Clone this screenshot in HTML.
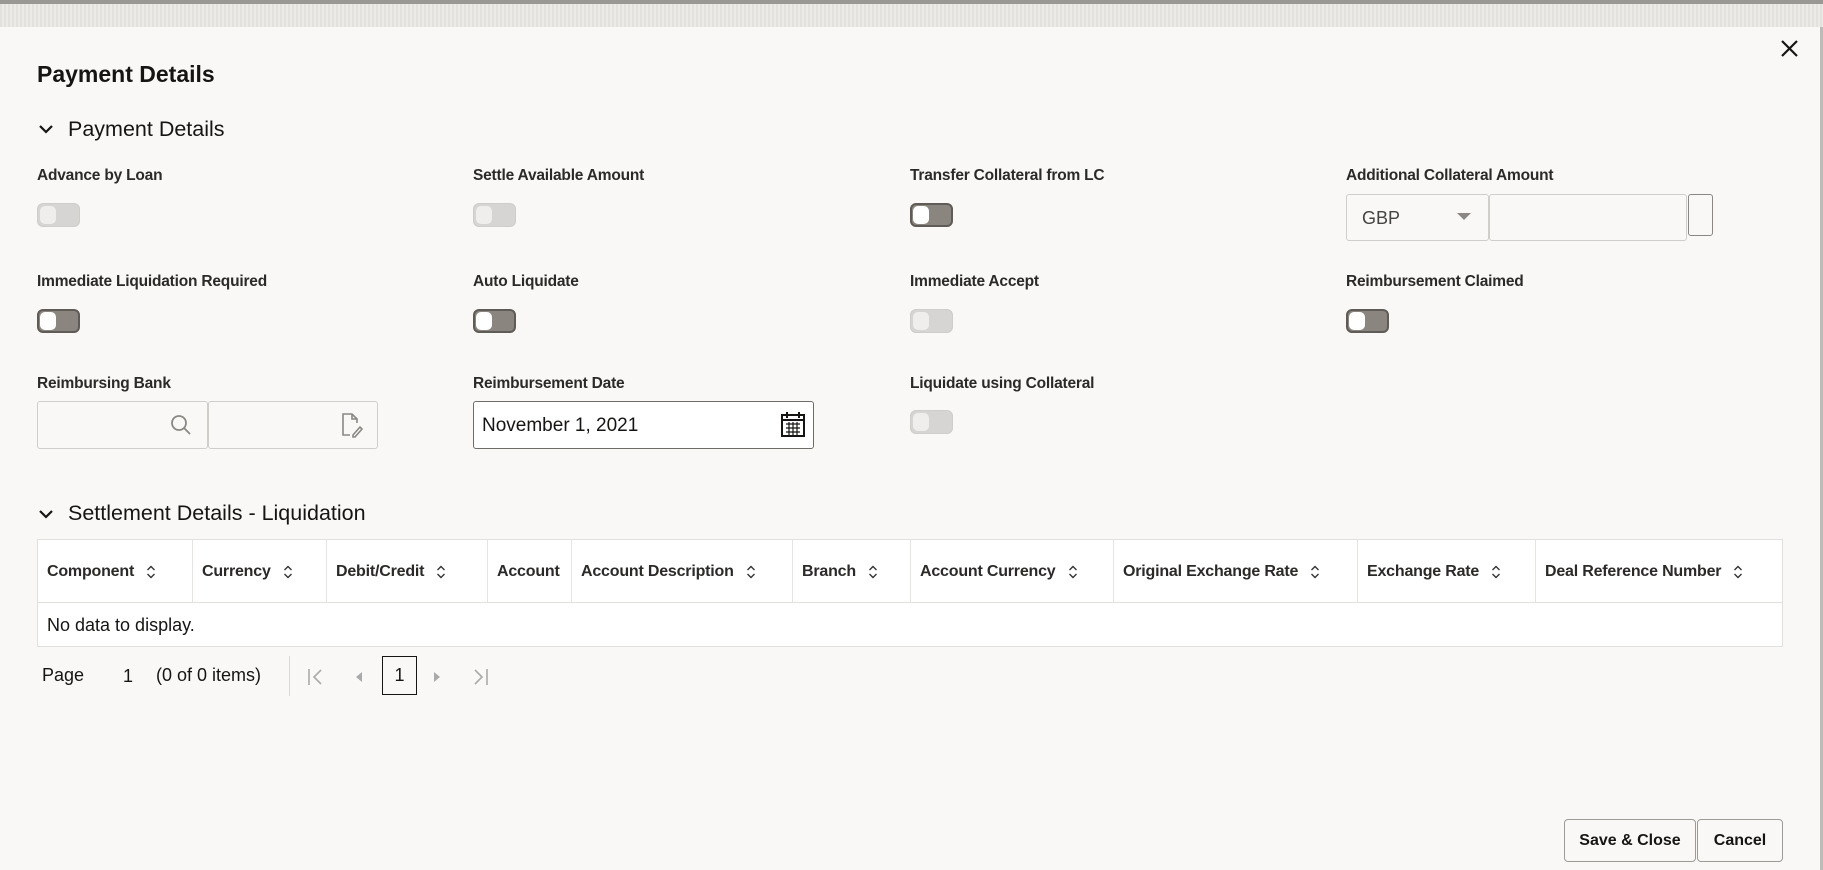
<!DOCTYPE html>
<html><head><meta charset="utf-8"><style>
*{box-sizing:border-box;margin:0;padding:0}
body{width:1823px;height:870px;background:#f9f8f6;font-family:"Liberation Sans",sans-serif;color:#161513;position:relative;overflow:hidden}
.a{position:absolute}
.top{left:0;top:0;width:1823px;height:27px;background:repeating-linear-gradient(90deg,#e3e1de 0 2px,#ecebe8 2px 4px);border-top:4px solid #9a9895}
.lbl{font-size:15.5px;font-weight:600;color:#2b2a28;white-space:nowrap;letter-spacing:-0.2px}
.tg{width:43px;height:24px;border-radius:6px}
.tg.d{background:#d6d5d3;border:1px solid #cfcdca}
.tg.d::after{content:"";position:absolute;left:2px;top:2px;width:16px;height:18px;border-radius:5px;background:#efeeec}
.tg.e{background:#8a857f;border:2px solid #5f5b56}
.tg.e::after{content:"";position:absolute;left:1px;top:1px;width:16px;height:18px;border-radius:5px;background:#fff}
.inp{background:#f9f8f6;border:1px solid #d0cecb;border-radius:3px}
.th{font-size:16px;font-weight:600;color:#2b2a28;white-space:nowrap;top:563px;letter-spacing:-0.2px}
.sep{top:539px;width:1px;height:63px;background:#e6e4e1}
.sort{display:inline-block;margin-left:12px;vertical-align:middle}
.btn{border:1px solid #9e9b97;border-radius:4px;background:#f9f8f6;font-size:16px;font-weight:600;text-align:center;line-height:41px;height:43px}
</style></head><body>
<div class="a top"></div>
<div class="a" style="right:0;top:27px;width:3px;height:843px;background:#bdbbb8"></div>
<div class="a" style="left:37px;top:61px;font-size:23px;font-weight:700">Payment Details</div>
<svg class="a" style="left:1780px;top:39px" width="19" height="19" viewBox="0 0 19 19"><path d="M2 2L17 17M17 2L2 17" stroke="#161513" stroke-width="2.2"/></svg>

<svg class="a" style="left:38px;top:123px" width="16" height="12" viewBox="0 0 16 12"><path d="M2 3L8 9L14 3" stroke="#161513" stroke-width="2.2" fill="none"/></svg>
<div class="a" style="left:68px;top:117px;font-size:21.5px;color:#161513">Payment Details</div>

<div class="a lbl" style="left:37px;top:167px">Advance by Loan</div>
<div class="a lbl" style="left:473px;top:167px">Settle Available Amount</div>
<div class="a lbl" style="left:910px;top:167px">Transfer Collateral from LC</div>
<div class="a lbl" style="left:1346px;top:167px">Additional Collateral Amount</div>
<div class="a tg d" style="left:37px;top:203px"></div>
<div class="a tg d" style="left:473px;top:203px"></div>
<div class="a tg e" style="left:910px;top:203px"></div>
<div class="a inp" style="left:1346px;top:194px;width:143px;height:47px"></div>
<div class="a" style="left:1362px;top:208px;font-size:18px;color:#444">GBP</div>
<div class="a" style="left:1457px;top:213px;width:0;height:0;border-left:7px solid transparent;border-right:7px solid transparent;border-top:7px solid #8a8784"></div>
<div class="a inp" style="left:1489px;top:194px;width:198px;height:47px"></div>
<div class="a" style="left:1688px;top:194px;width:25px;height:42px;border:1px solid #8a8784;border-radius:3px"></div>

<div class="a lbl" style="left:37px;top:273px">Immediate Liquidation Required</div>
<div class="a lbl" style="left:473px;top:273px">Auto Liquidate</div>
<div class="a lbl" style="left:910px;top:273px">Immediate Accept</div>
<div class="a lbl" style="left:1346px;top:273px">Reimbursement Claimed</div>
<div class="a tg e" style="left:37px;top:309px"></div>
<div class="a tg e" style="left:473px;top:309px"></div>
<div class="a tg d" style="left:910px;top:309px"></div>
<div class="a tg e" style="left:1346px;top:309px"></div>

<div class="a lbl" style="left:37px;top:375px">Reimbursing Bank</div>
<div class="a lbl" style="left:473px;top:375px">Reimbursement Date</div>
<div class="a lbl" style="left:910px;top:375px">Liquidate using Collateral</div>
<div class="a inp" style="left:37px;top:401px;width:171px;height:48px"></div>
<svg class="a" style="left:169px;top:413px" width="24" height="24" viewBox="0 0 24 24"><circle cx="10" cy="10" r="7" stroke="#8a8784" stroke-width="1.8" fill="none"/><path d="M15 15L21 21" stroke="#8a8784" stroke-width="1.8"/></svg>
<div class="a inp" style="left:208px;top:401px;width:170px;height:48px"></div>
<svg class="a" style="left:340px;top:411px" width="24" height="28" viewBox="0 0 24 28"><path d="M10 24H3V3H12L17 8V12M12 3V8H17" stroke="#8a8784" stroke-width="1.6" fill="none"/><path d="M13 24L20 16L22 18L15 26H13Z" stroke="#8a8784" stroke-width="1.6" fill="none"/></svg>
<div class="a" style="left:473px;top:401px;width:341px;height:48px;background:#fff;border:1px solid #6f6c68;border-radius:3px"></div>
<div class="a" style="left:482px;top:415px;font-size:19px">November 1, 2021</div>
<svg class="a" style="left:780px;top:410px" width="26" height="28" viewBox="0 0 26 28"><rect x="2" y="5" width="22" height="21" stroke="#161513" stroke-width="2" fill="none"/><path d="M7 2V8M19 2V8M2 10H24" stroke="#161513" stroke-width="2"/><path d="M6 14H20M6 18H20M6 22H20M9 12V25M13 12V25M17 12V25" stroke="#161513" stroke-width="1.2"/></svg>
<div class="a tg d" style="left:910px;top:410px"></div>

<svg class="a" style="left:38px;top:508px" width="16" height="12" viewBox="0 0 16 12"><path d="M2 3L8 9L14 3" stroke="#161513" stroke-width="2.2" fill="none"/></svg>
<div class="a" style="left:68px;top:501px;font-size:21.5px">Settlement Details - Liquidation</div>

<div class="a" style="left:37px;top:539px;width:1746px;height:108px;background:#fff;border:1px solid #e2e0dd"></div>
<div class="a" style="left:37px;top:602px;width:1746px;height:1px;background:#e2e0dd"></div>
<div class="a sep" style="left:192px"></div><div class="a sep" style="left:326px"></div><div class="a sep" style="left:487px"></div><div class="a sep" style="left:571px"></div><div class="a sep" style="left:792px"></div><div class="a sep" style="left:910px"></div><div class="a sep" style="left:1113px"></div><div class="a sep" style="left:1357px"></div><div class="a sep" style="left:1535px"></div>
<div class="a th" style="left:47px">Component<svg class="sort" width="10" height="16" viewBox="0 0 10 16"><path d="M1.5 6L5 2.5L8.5 6M1.5 10L5 13.5L8.5 10" stroke="#333" stroke-width="1.4" fill="none"/></svg></div>
<div class="a th" style="left:202px">Currency<svg class="sort" width="10" height="16" viewBox="0 0 10 16"><path d="M1.5 6L5 2.5L8.5 6M1.5 10L5 13.5L8.5 10" stroke="#333" stroke-width="1.4" fill="none"/></svg></div>
<div class="a th" style="left:336px">Debit/Credit<svg class="sort" width="10" height="16" viewBox="0 0 10 16"><path d="M1.5 6L5 2.5L8.5 6M1.5 10L5 13.5L8.5 10" stroke="#333" stroke-width="1.4" fill="none"/></svg></div>
<div class="a th" style="left:497px">Account</div>
<div class="a th" style="left:581px">Account Description<svg class="sort" width="10" height="16" viewBox="0 0 10 16"><path d="M1.5 6L5 2.5L8.5 6M1.5 10L5 13.5L8.5 10" stroke="#333" stroke-width="1.4" fill="none"/></svg></div>
<div class="a th" style="left:802px">Branch<svg class="sort" width="10" height="16" viewBox="0 0 10 16"><path d="M1.5 6L5 2.5L8.5 6M1.5 10L5 13.5L8.5 10" stroke="#333" stroke-width="1.4" fill="none"/></svg></div>
<div class="a th" style="left:920px">Account Currency<svg class="sort" width="10" height="16" viewBox="0 0 10 16"><path d="M1.5 6L5 2.5L8.5 6M1.5 10L5 13.5L8.5 10" stroke="#333" stroke-width="1.4" fill="none"/></svg></div>
<div class="a th" style="left:1123px">Original Exchange Rate<svg class="sort" width="10" height="16" viewBox="0 0 10 16"><path d="M1.5 6L5 2.5L8.5 6M1.5 10L5 13.5L8.5 10" stroke="#333" stroke-width="1.4" fill="none"/></svg></div>
<div class="a th" style="left:1367px">Exchange Rate<svg class="sort" width="10" height="16" viewBox="0 0 10 16"><path d="M1.5 6L5 2.5L8.5 6M1.5 10L5 13.5L8.5 10" stroke="#333" stroke-width="1.4" fill="none"/></svg></div>
<div class="a th" style="left:1545px">Deal Reference Number<svg class="sort" width="10" height="16" viewBox="0 0 10 16"><path d="M1.5 6L5 2.5L8.5 6M1.5 10L5 13.5L8.5 10" stroke="#333" stroke-width="1.4" fill="none"/></svg></div>
<div class="a" style="left:47px;top:615px;font-size:18px">No data to display.</div>

<div class="a" style="left:42px;top:665px;font-size:18px">Page</div>
<div class="a" style="left:123px;top:666px;font-size:18px">1</div>
<div class="a" style="left:156px;top:665px;font-size:18px">(0 of 0 items)</div>
<div class="a" style="left:289px;top:656px;width:1px;height:40px;background:#dcdad7"></div>
<svg class="a" style="left:306px;top:667px" width="20" height="20" viewBox="0 0 20 20"><path d="M3 2V18M15 3L8 10L15 17" stroke="#aaa" stroke-width="1.6" fill="none"/></svg>
<svg class="a" style="left:352px;top:668px" width="14" height="18" viewBox="0 0 14 18"><path d="M10 4L4 9L10 14Z" fill="#aaa"/></svg>
<div class="a" style="left:382px;top:656px;width:35px;height:39px;border:1.5px solid #161513;font-size:18px;text-align:center;line-height:36px">1</div>
<svg class="a" style="left:430px;top:668px" width="14" height="18" viewBox="0 0 14 18"><path d="M4 4L10 9L4 14Z" fill="#aaa"/></svg>
<svg class="a" style="left:470px;top:667px" width="20" height="20" viewBox="0 0 20 20"><path d="M17 2V18M5 3L12 10L5 17" stroke="#aaa" stroke-width="1.6" fill="none"/></svg>

<div class="a btn" style="left:1564px;top:819px;width:132px">Save &amp; Close</div>
<div class="a btn" style="left:1697px;top:819px;width:86px">Cancel</div>
</body></html>
